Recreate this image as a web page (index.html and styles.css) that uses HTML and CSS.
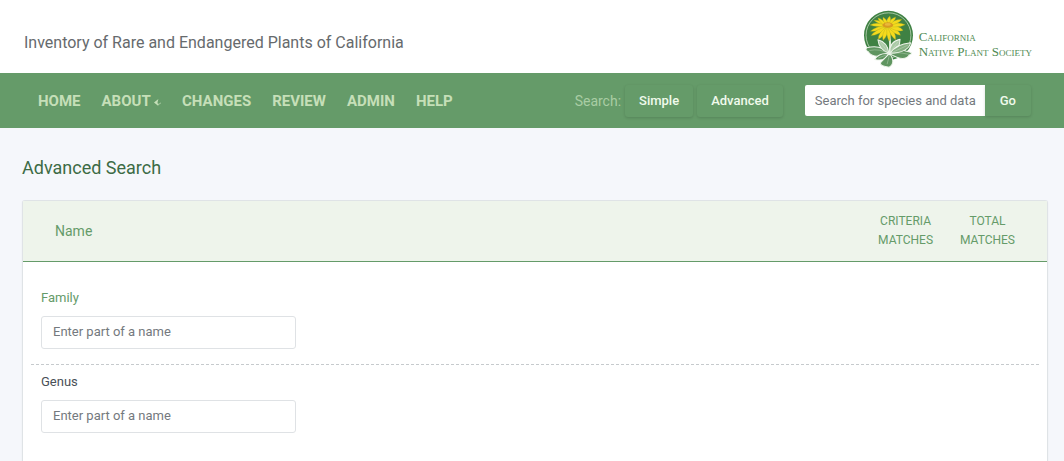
FILE: index.html
```
<!DOCTYPE html>
<html lang="en">
<head>
  <meta charset="utf-8">
  <meta name="viewport" content="width=device-width, initial-scale=1">
  <title>Advanced Search</title>
  <link rel="stylesheet" href="styles.css">
</head>
<body>
  <header class="site-header">
    <div class="site-title">Inventory of Rare and Endangered Plants of California</div>
    <a class="logo" href="#" aria-label="California Native Plant Society">
      <svg class="logo-mark" viewBox="26 30 147 171" aria-hidden="true">
        <circle cx="98" cy="106" r="72" fill="#3f8143"/>
        <circle cx="98" cy="106" r="66" fill="none" stroke="#d5e6d0" stroke-width="2"/>
        <path d="M97 90 Q106 125 101 165" fill="none" stroke="#dbe9d5" stroke-width="6"/>
        <g fill="#5f9560" stroke="#eff5ec" stroke-width="3" stroke-linejoin="round">
          <path d="M99 160 Q52 178 38 154 Q28 149 34 143 Q76 132 99 160z"/>
          <path d="M101 160 Q145 186 159 164 Q176 158 151 153 Q120 142 101 160z"/>
          <path d="M99 158 Q70 149 67 119 Q95 126 99 158z" fill="#a9c8a5"/>
          <path d="M102 157 Q100 125 132 118 Q133 147 102 157z" fill="#a9c8a5"/>
          <path d="M103 159 Q120 132 163 128 Q157 157 103 159z" fill="#86b083"/>
          <path d="M98 160 Q89 185 57 177 Q71 157 98 160z"/>
          <path d="M101 159 Q121 187 100 200 Q65 195 78 183z"/>
        </g>
        <g fill="none" stroke="#dfecda" stroke-width="1">
          <path d="M42 151 Q72 144 98 160 M104 160 Q132 154 158 162 M73 125 L99 158 M126 125 L102 157 M155 135 L104 159 M68 173 L99 161 M94 191 L101 163"/>
        </g>
        <g fill="#f5da1c" stroke="#a4a824" stroke-width="1">
          <path d="M96 77 Q70 59 55 62 Q67 73 96 80z"/>
          <path d="M96 78 Q62 65 44 76 Q62 82 96 82z"/>
          <path d="M96 79 Q62 78 45 94 Q63 96 96 84z"/>
          <path d="M95 80 Q59 88 47 107 Q68 106 97 84z"/>
          <path d="M94 80 Q65 101 68 118 Q83 110 99 83z"/>
          <path d="M93 81 Q76 105 82 121 Q94 111 100 82z"/>
          <path d="M94 81 Q90 107 100 123 Q108 105 101 81z"/>
          <path d="M96 81 Q104 110 119 119 Q121 100 102 79z"/>
          <path d="M97 81 Q116 105 133 106 Q130 90 102 78z"/>
          <path d="M98 81 Q125 99 141 91 Q128 77 101 76z"/>
          <path d="M98 80 Q128 85 147 75 Q126 65 99 75z"/>
          <path d="M98 77 Q128 73 137 60 Q119 58 97 74z"/>
          <path d="M98 76 Q119 64 119 52 Q103 57 94 75z"/>
          <path d="M99 76 Q108 62 102 49 Q91 58 91 76z"/>
          <path d="M98 76 Q93 58 82 53 Q79 65 91 77z"/>
          <path d="M94 78 Q80 57 67 55 Q70 69 92 80z"/>
        </g>
        <ellipse cx="96" cy="76" rx="16" ry="8" fill="#d99b20"/>
        <ellipse cx="96" cy="74" rx="9" ry="4" fill="#eab83b"/>
      </svg>
      <span class="logo-text">California<br>Native Plant Society</span>
    </a>
  </header>

  <div class="navbar">
    <nav class="menu">
      <a href="#">HOME</a>
      <a href="#">ABOUT
        <svg class="caret" viewBox="0 0 8 8" aria-hidden="true">
          <path d="M5 0 L0 4 L5 8 L4 4z" fill="currentColor"/>
          <path d="M4 6 Q6 7 8 4" fill="none" stroke="currentColor"/>
        </svg>
      </a>
      <a href="#">CHANGES</a>
      <a href="#">REVIEW</a>
      <a href="#">ADMIN</a>
      <a href="#">HELP</a>
    </nav>
    <form class="search">
      <span class="search-label">Search:</span>
      <button class="btn" type="button">Simple</button>
      <button class="btn" type="button">Advanced</button>
      <div class="search-group">
        <input class="search-input" type="text" placeholder="Search for species and data" aria-label="Search for species and data">
        <button class="btn btn-go" type="submit">Go</button>
      </div>
    </form>
  </div>

  <main class="content">
    <h1>Advanced Search</h1>
    <section class="card">
      <div class="card-header">
        <h2>Name</h2>
        <div class="matches">
          <span>CRITERIA<br>MATCHES</span>
          <span>TOTAL<br>MATCHES</span>
        </div>
      </div>
      <div class="card-body">
        <div class="field">
          <label class="active" for="family">Family</label>
          <input id="family" type="text" placeholder="Enter part of a name">
        </div>
        <div class="field">
          <label for="genus">Genus</label>
          <input id="genus" type="text" placeholder="Enter part of a name">
        </div>
      </div>
    </section>
  </main>
</body>
</html>
```
FILE: styles.css
```
* {
  box-sizing: border-box;
}
body {
  margin: 0;
  min-height: 100vh;
  display: flex;
  flex-direction: column;
  background-color: #f5f7fb;
  color: #495057;
  font-family: Roboto, Arial, sans-serif;
  font-size: 14px;
}
a {
  text-decoration: none;
}
input, button {
  font-family: inherit;
  font-size: 13px;
}

/* header */
.site-header {
  display: flex;
  justify-content: space-between;
  align-items: center;
  padding: 8px 32px 4px 24px;
  background-color: #fff;
}
.site-title {
  padding-top: 8px;
  font-size: 16px;
  color: #666a6d;
}
.logo {
  display: flex;
  align-items: center;
  gap: 5px;
  color: #4f8a52;
}
.logo-mark {
  width: 50px;
  height: 61px;
}
.logo-text {
  padding-top: 10px;
  font-family: "Liberation Serif", serif;
  font-variant: small-caps;
  font-size: 13px;
  line-height: 15px;
}

/* navigation bar */
.navbar {
  display: flex;
  justify-content: space-between;
  align-items: center;
  min-height: 55px;
  padding: 0 33px 0 38px;
  background-color: #659b69;
}
.menu {
  display: flex;
  gap: 21px;
}
.menu a {
  color: #c5dfb8;
  font-size: 15px;
  font-weight: 700;
}
.caret {
  width: 7px;
  height: 7px;
}
.search {
  display: flex;
  align-items: center;
  gap: 4px;
}
.search-label {
  color: #a9cda4;
  font-size: 14px;
}
.btn {
  height: 32px;
  padding: 0 14px;
  border: 0;
  border-radius: 3px;
  background-color: #659b69;
  box-shadow: 0 1px 3px rgba(0, 0, 0, 0.15);
  color: #f0faec;
  font-weight: 500;
}
.search-group {
  display: flex;
  margin-left: 18px;
}
.search-input {
  width: 180px;
  height: 31px;
  padding: 0 4px 0 10px;
  border: 0;
  border-radius: 2px 0 0 2px;
}
.btn-go {
  height: 31px;
  padding: 0 15px;
  border-radius: 0 3px 3px 0;
}
::placeholder {
  color: #74797e;
  opacity: 1;
}

/* page content */
.content {
  flex: 1;
  display: flex;
  flex-direction: column;
  padding: 28px 16px 0 22px;
}
h1 {
  margin: 0 0 20px;
  color: #3c6b45;
  font-size: 18px;
  font-weight: 400;
  line-height: 24px;
}
.card {
  flex: 1;
  border: 1px solid #dfe3e6;
  border-bottom: 0;
  border-radius: 3px 3px 0 0;
  background-color: #fff;
  box-shadow: 0 1px 2px rgba(0, 0, 0, 0.05);
}
.card-header {
  display: flex;
  justify-content: space-between;
  align-items: center;
  padding: 11px 32px;
  border-bottom: 1px solid #659b69;
  background-color: #eef4eb;
  color: #659b69;
}
h2 {
  margin: 0;
  font-size: 14px;
  font-weight: 400;
}
.matches {
  display: flex;
  gap: 27px;
  font-size: 12px;
  line-height: 19px;
  text-align: center;
}
.card-body {
  padding: 19px 8px;
}
.field {
  padding: 7px 10px 15px;
}
.field + .field {
  border-top: 1px dashed #c6cacd;
}
.field label {
  display: block;
  margin-bottom: 8px;
  font-size: 13px;
  line-height: 20px;
}
.field .active {
  color: #659b69;
}
.field input {
  display: block;
  width: 255px;
  height: 33px;
  padding: 0 11px 2px;
  border: 1px solid #dfe2e5;
  border-radius: 3px;
}
```
